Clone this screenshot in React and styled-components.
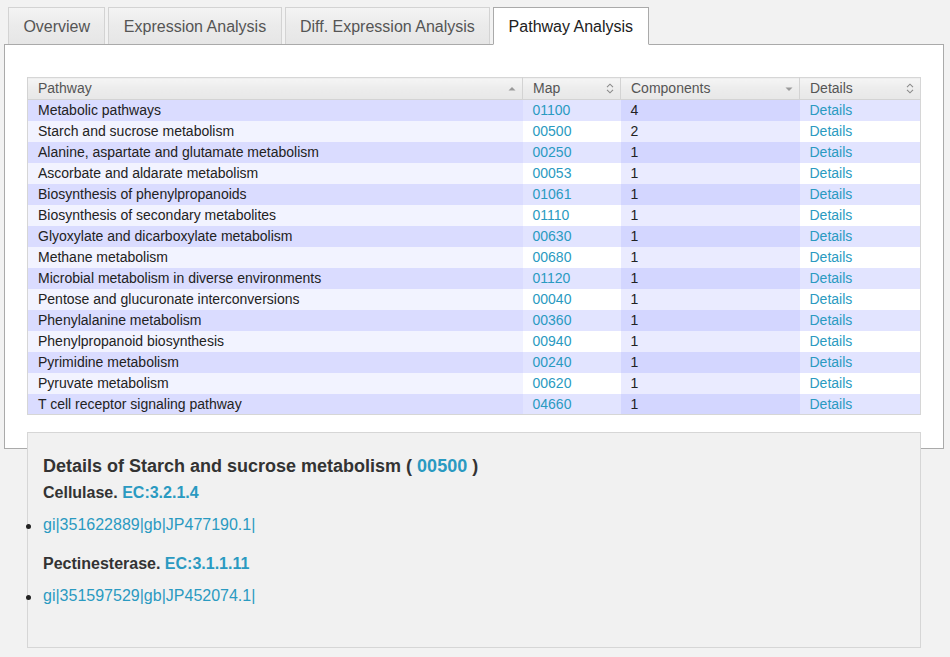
import styled, { createGlobalStyle } from 'styled-components';

const GlobalStyle = createGlobalStyle`
    body {
        margin: 0;
        background: #f2f2f2;
        font-family: "Liberation Sans", Arial, sans-serif;
        color: #333;
    }
`

const Page = styled.div`
    padding: 7px 0 9px 4px;
`

const TabBar = styled.ul`
    display: flex;
    gap: 3px;
    margin: 0;
    padding: 0 0 0 4px;
    list-style: none;
`

const Tab = styled.li`
    height: 36px;
    line-height: 37px;
    padding: 0 14.4px;
    font-size: 16px;
    border: 1px solid ${p => p.$active ? '#aaaaaa' : '#d3d3d3'};
    border-bottom: ${p => p.$active ? '1px solid #fff' : 'none'};
    background: ${p => p.$active ? '#fff' : 'linear-gradient(#f4f4f4, #ebebeb 50%, #e6e6e6)'};
    color: ${p => p.$active ? '#212121' : '#555'};
    margin-bottom: ${p => p.$active ? '-1px' : '0'};
    position: relative;
    cursor: pointer;
`

const Panel = styled.div`
    width: 940px;
    box-sizing: border-box;
    border: 1px solid #aaaaaa;
    background: #fff;
    padding: 32px 22px 33px;
`

const Table = styled.table`
    width: 100%;
    table-layout: fixed;
    border-collapse: collapse;
    border: 1px solid #d6d6d6;
    font-size: 14px;
`

const HeadCell = styled.th`
    height: 22px;
    padding: 0 6px 0 10px;
    font-weight: normal;
    text-align: left;
    color: #555;
    background: linear-gradient(#f5f5f5, #ececec 50%, #e7e7e7);
    border-left: 1px solid #d3d3d3;
    border-bottom: 1px solid #d3d3d3;
    box-sizing: border-box;
`

const HeadInner = styled.div`
    display: flex;
    align-items: center;
    justify-content: space-between;
    line-height: 15px;
`

const rowColors = {
    odd: ['#e2e4ff', '#d3d6ff', '#dadcff'],
    even: ['#ffffff', '#eaebff', '#f2f3ff'],
}

const Cell = styled.td`
    height: 21px;
    padding: 1px 10px 0;
    line-height: 15px;
    box-sizing: border-box;
    white-space: nowrap;
    overflow: hidden;
    background: ${p => rowColors[p.$odd ? 'odd' : 'even'][p.$sort || 0]};
    color: #222;
`

const Link = styled.a`
    color: #2a9ac1;
    text-decoration: none;
    cursor: pointer;
`

const DetailsBox = styled.div`
    width: 894px;
    box-sizing: border-box;
    margin: -17px 0 0 23px;
    padding: 22px 15px 22px 15px;
    background: #f1f1f1;
    border: 1px solid #d6d6d6;
`

const Heading = styled.h3`
    margin: 0 0 6px;
    font-size: 18px;
    line-height: 22px;
    color: #333;
`

const Enzyme = styled.h4`
    margin: 0 0 12px;
    font-size: 16px;
    line-height: 20px;
    color: #333;
`

const GeneList = styled.ul`
    margin: 0 0 19px;
    padding: 0;
    list-style: none;
`

const Gene = styled.li`
    position: relative;
    font-size: 16px;
    line-height: 20px;

    &::before {
        content: "";
        position: absolute;
        left: -17px;
        top: 9px;
        width: 5px;
        height: 5px;
        border-radius: 50%;
        background: #222;
    }
`

const SortIcon = ({ dir }) => {
    if (dir === 'asc') {
        return (
            <svg width="8" height="10" viewBox="0 0 8 10">
                <path d="M0.5 6.5 L4 3 L7.5 6.5 Z" fill="#9a9a9a" />
            </svg>
        );
    }
    if (dir === 'desc') {
        return (
            <svg width="8" height="10" viewBox="0 0 8 10">
                <path d="M0.5 3.5 L4 7 L7.5 3.5 Z" fill="#9a9a9a" />
            </svg>
        );
    }
    return (
        <svg width="8" height="11" viewBox="0 0 8 11">
            <path d="M1 4.2 L4 1.2 L7 4.2 M1 6.8 L4 9.8 L7 6.8" fill="none" stroke="#8a8a8a" strokeWidth="1.1" />
        </svg>
    );
};

const columns = [
    { title: 'Pathway', width: 495, dir: 'asc' },
    { title: 'Map', width: 98, dir: 'both' },
    { title: 'Components', width: 179, dir: 'desc' },
    { title: 'Details', width: 121, dir: 'both' },
];

const pathways = [
    ['Metabolic pathways', '01100', '4'],
    ['Starch and sucrose metabolism', '00500', '2'],
    ['Alanine, aspartate and glutamate metabolism', '00250', '1'],
    ['Ascorbate and aldarate metabolism', '00053', '1'],
    ['Biosynthesis of phenylpropanoids', '01061', '1'],
    ['Biosynthesis of secondary metabolites', '01110', '1'],
    ['Glyoxylate and dicarboxylate metabolism', '00630', '1'],
    ['Methane metabolism', '00680', '1'],
    ['Microbial metabolism in diverse environments', '01120', '1'],
    ['Pentose and glucuronate interconversions', '00040', '1'],
    ['Phenylalanine metabolism', '00360', '1'],
    ['Phenylpropanoid biosynthesis', '00940', '1'],
    ['Pyrimidine metabolism', '00240', '1'],
    ['Pyruvate metabolism', '00620', '1'],
    ['T cell receptor signaling pathway', '04660', '1'],
];

const enzymes = [
    { name: 'Cellulase.', ec: 'EC:3.2.1.4', genes: ['gi|351622889|gb|JP477190.1|'] },
    { name: 'Pectinesterase.', ec: 'EC:3.1.1.11', genes: ['gi|351597529|gb|JP452074.1|'] },
];

const tabs = ['Overview', 'Expression Analysis', 'Diff. Expression Analysis', 'Pathway Analysis'];

function App() {
    return (
        <Page>
            <GlobalStyle />
            <TabBar>
                {tabs.map((t, i) => (
                    <Tab key={t} $active={i === 3}>{t}</Tab>
                ))}
            </TabBar>
            <Panel>
                <Table>
                    <colgroup>
                        {columns.map(c => <col key={c.title} style={{ width: c.width }} />)}
                    </colgroup>
                    <thead>
                        <tr>
                            {columns.map(c => (
                                <HeadCell key={c.title}>
                                    <HeadInner>
                                        <span>{c.title}</span>
                                        <SortIcon dir={c.dir} />
                                    </HeadInner>
                                </HeadCell>
                            ))}
                        </tr>
                    </thead>
                    <tbody>
                        {pathways.map((row, i) => {
                            const odd = i % 2 === 0;
                            return (
                                <tr key={row[1]}>
                                    <Cell $odd={odd} $sort={2}>{row[0]}</Cell>
                                    <Cell $odd={odd}><Link>{row[1]}</Link></Cell>
                                    <Cell $odd={odd} $sort={1}>{row[2]}</Cell>
                                    <Cell $odd={odd}><Link>Details</Link></Cell>
                                </tr>
                            );
                        })}
                    </tbody>
                </Table>
            </Panel>
            <DetailsBox>
                <Heading>Details of Starch and sucrose metabolism ( <Link>00500</Link> )</Heading>
                {enzymes.map(e => (
                    <div key={e.ec}>
                        <Enzyme>{e.name} <Link>{e.ec}</Link></Enzyme>
                        <GeneList>
                            {e.genes.map(g => <Gene key={g}><Link>{g}</Link></Gene>)}
                        </GeneList>
                    </div>
                ))}
            </DetailsBox>
        </Page>
    );
}

export default App;
